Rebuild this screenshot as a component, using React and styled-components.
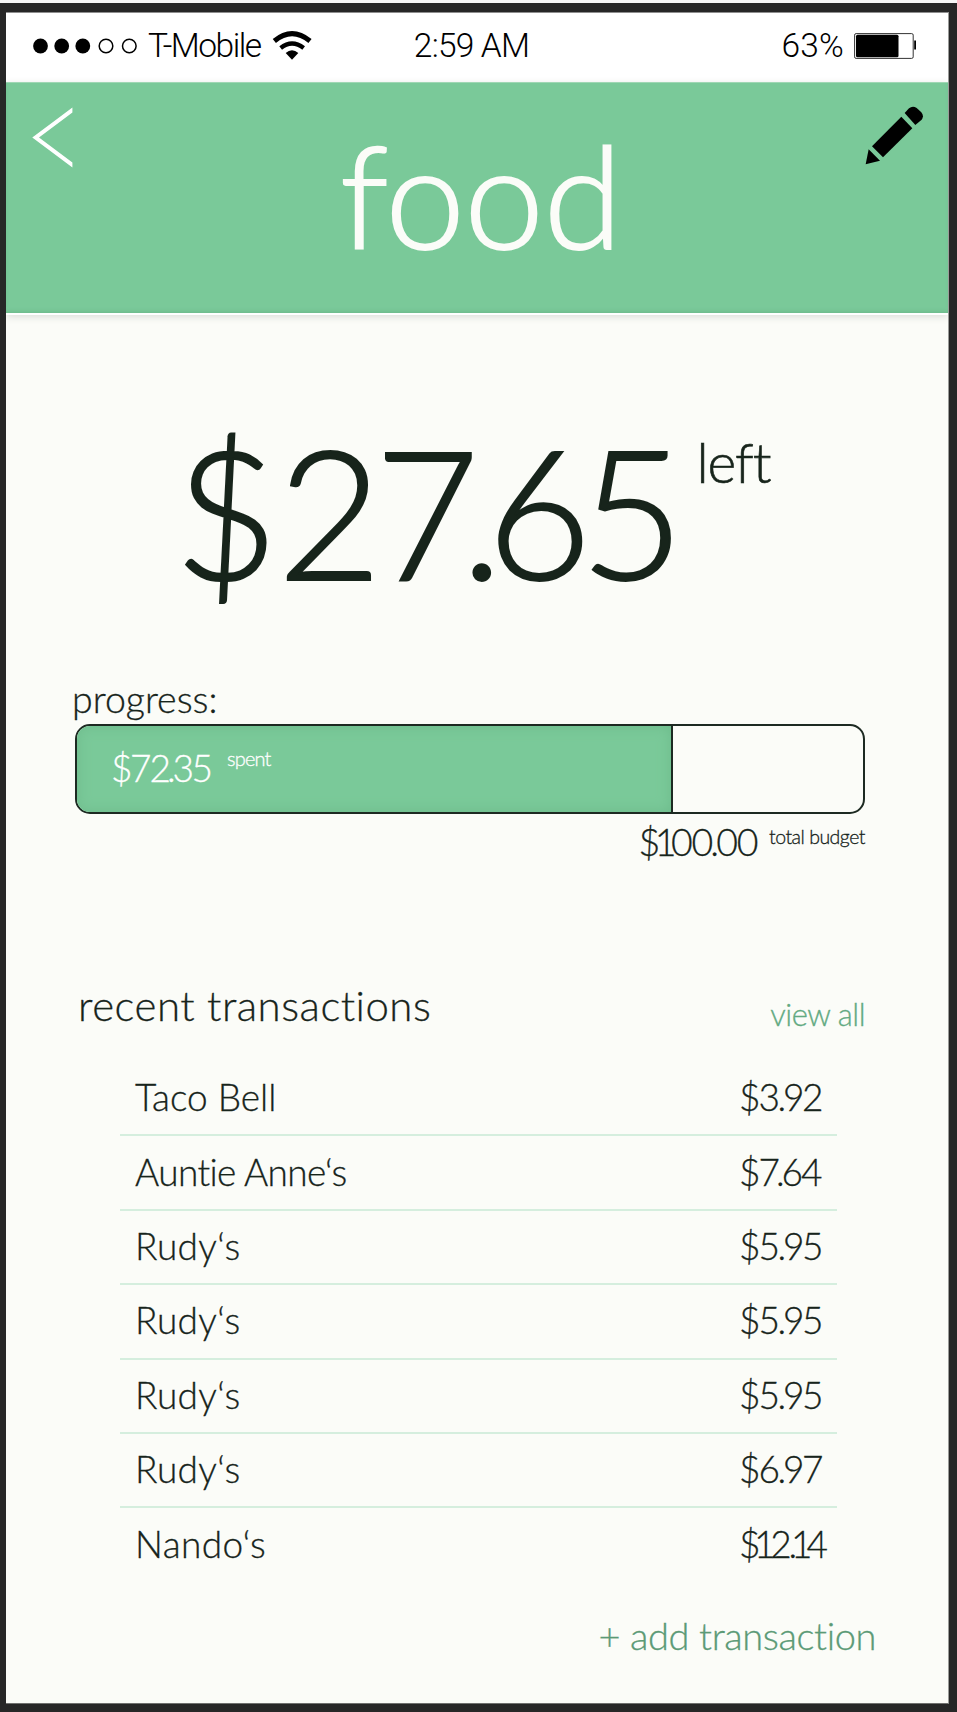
import React from "react";
import styled, { createGlobalStyle } from "styled-components";

const color = {
  frame: "#272727",
  green: "#7ac999",
  paper: "#fbfcf8",
  ink: "#17241b",
  line: "#d5eede",
};

const GlobalStyle = createGlobalStyle`
  * { box-sizing: border-box; }
  body { margin: 0; background: ${color.frame}; }
`;

const Device = styled.div`
  width: 957px;
  height: 1712px;
  padding: 9px 8px 7px 6px;
  border-top: 3px solid #f7f7f7;
  background: ${color.frame};
  overflow: hidden;
`;

const Screen = styled.main`
  height: 1692px;
  border-top: 1px solid #8e8e8e;
  border-right: 1px solid #9a9b99;
  border-bottom: 1px solid #6f706e;
  background: ${color.paper};
  color: ${color.ink};
  font-family: Lato, "Open Sans", sans-serif;
  font-weight: 300;
  overflow: hidden;
`;

const Text = styled.span`
  display: block;
  white-space: nowrap;
  font-size: ${(p) => p.$size}px;
  line-height: ${(p) => p.$line || p.$size}px;
  letter-spacing: ${(p) => p.$track || 0}px;
  color: ${(p) => p.$color || "inherit"};
  margin-top: ${(p) => p.$drop || 0}px;
  -webkit-text-stroke: ${(p) => p.$bold ?? 0.3}px currentColor;
`;

const Digit = styled.span`
  letter-spacing: ${(p) => p.$track}px;
`;

const StatusBar = styled.div`
  display: grid;
  grid-template-columns: 1fr auto 1fr;
  align-items: center;
  height: 69px;
  padding: 0 32px 4px 27px;
  background: #fff;
  color: #000;
  font-family: Roboto, "Liberation Sans", sans-serif;
`;

const StatusGroup = styled.div`
  display: flex;
  align-items: center;
  justify-content: ${(p) => (p.$end ? "flex-end" : "flex-start")};
`;

const Clock = styled.div`
  padding-right: 6px;
`;

const Signal = styled.svg`
  width: 106px;
  height: 18px;
  margin-right: 9px;
`;

const Wifi = styled.svg`
  width: 40px;
  height: 30px;
  margin-left: 11px;
  margin-top: -1px;
`;

const Battery = styled.svg`
  width: 62px;
  height: 26px;
  margin-left: 10px;
`;

const Header = styled.header`
  display: grid;
  grid-template-columns: 1fr auto 1fr;
  align-items: start;
  height: 231px;
  padding: 23px 24px 0 26px;
  background: ${color.green};
  border-top: 1px solid #9fd7b4;
  box-shadow: inset 0 -3px 4px -2px #6cb688, 0 2px 0 #fff, 0 3px 8px #d6d7d3;
`;

const Title = styled.h1`
  margin: 17px 0 0;
  padding-left: 6px;
  font-size: 142px;
  line-height: 142px;
  font-weight: 300;
  letter-spacing: 0;
  color: ${color.paper};
  -webkit-text-stroke: 2px currentColor;
`;

const Back = styled.svg`
  width: 42px;
  height: 64px;
`;

const Pencil = styled.svg`
  width: 59px;
  height: 59px;
  justify-self: end;
`;

const Remaining = styled.section`
  display: flex;
  align-items: flex-start;
  gap: 21px;
  margin: 107px 0 0 168px;
`;

const Section = styled.section`
  width: 793px;
  margin: ${(p) => p.$top}px 0 0 66px;
`;

const Bar = styled.div`
  height: 90px;
  margin: 5px 0 0 3px;
  border: 2px solid #1d2a22;
  border-radius: 15px;
  overflow: hidden;
`;

const BarFill = styled.div`
  display: flex;
  gap: 16px;
  height: 100%;
  padding: 22px 0 0 34px;
  border-right: 2px solid #1d2a22;
  background: ${color.green};
  box-shadow: inset 0 0 14px #6dbb8b;
  color: #fff;
`;

const Budget = styled.div`
  display: flex;
  justify-content: flex-end;
  gap: 12px;
  margin-top: 8px;
`;

const SectionHead = styled.div`
  display: flex;
  justify-content: space-between;
  padding-left: 6px;
`;

const List = styled.ul`
  width: 717px;
  margin: 32px 0 0 48px;
  padding: 0;
  list-style: none;
`;

const Row = styled.li`
  display: flex;
  justify-content: space-between;
  align-items: center;
  height: 74.4px;
  padding: 0 0 3px 15px;
  border-bottom: 2px solid ${color.line};
  &:last-child { border-bottom-color: transparent; }
`;

const Amount = styled.div`
  width: 98px;
`;

const AddLink = styled.div`
  display: flex;
  justify-content: flex-end;
  width: 870px;
`;

const even = [-2, -2.5, -3, -2.5, 0];

const transactions = [
  { name: "Taco Bell", amount: "$3.92", track: 0, kern: even },
  { name: "Auntie Anne‘s", amount: "$7.64", track: -0.6, kern: [-2, -4, -3, -2, 0] },
  { name: "Rudy‘s", amount: "$5.95", track: 0.3, kern: even },
  { name: "Rudy‘s", amount: "$5.95", track: 0.3, kern: even },
  { name: "Rudy‘s", amount: "$5.95", track: 0.3, kern: even },
  { name: "Rudy‘s", amount: "$6.97", track: 0.3, kern: even },
  { name: "Nando‘s", amount: "$12.14", track: 0.4, kern: [-6.5, -5.2, -3.3, -6, -6, 0] },
];

const spentPercent = 75.8;

function Money({ value, kern, size, line, bold }) {
  return (
    <Text $size={size} $line={line} $bold={bold}>
      {[...value].map((ch, i) => (
        <Digit key={i} $track={kern[i]}>{ch}</Digit>
      ))}
    </Text>
  );
}

export default function App() {
  return (
    <Device>
      <GlobalStyle />
      <Screen>
        <StatusBar>
          <StatusGroup>
            <Signal viewBox="0 0 106 18">
              <circle cx="7.5" cy="9" r="7.4" />
              <circle cx="28.7" cy="9" r="7.4" />
              <circle cx="49.8" cy="9" r="7.4" />
              <circle cx="73" cy="9" r="6.8" fill="none" stroke="#000" strokeWidth="1.5" />
              <circle cx="96.3" cy="9" r="6.8" fill="none" stroke="#000" strokeWidth="1.5" />
            </Signal>
            <Text $size={33.5} $track={-1.5} $bold={0}>T-Mobile</Text>
            <Wifi viewBox="816 88 120 90">
              <path d="M823 121Q876 77 930 121" fill="none" stroke="#000" strokeWidth="15" />
              <path d="M842 142Q876 115 911 142" fill="none" stroke="#000" strokeWidth="13" />
              <path d="M857 157Q876 141 895 157L876 177Z" />
            </Wifi>
          </StatusGroup>
          <Clock>
            <Text $size={33.5} $track={-0.8} $bold={0}>2:59 AM</Text>
          </Clock>
          <StatusGroup $end>
            <Text $size={33.5} $track={0.2} $bold={0}>63%</Text>
            <Battery viewBox="0 0 62 26">
              <rect x="0.6" y="0.6" width="58.6" height="24.8" rx="1.5" fill="#fff" stroke="#333" />
              <rect x="2" y="1.7" width="42.5" height="22.6" rx="1.5" />
              <rect x="60.2" y="7.5" width="1.8" height="9" />
            </Battery>
          </StatusGroup>
        </StatusBar>

        <Header>
          <Back viewBox="0 0 42 64">
            <path d="M0.3 31.5L40.4 1.5V6.5L7 31.5L40.4 56.5V61.5Z" fill="#fff" />
          </Back>
          <Title>food</Title>
          <Pencil viewBox="0 0 177 177">
            <path d="M109 32L142 67L54 154L21 121Z" />
            <path d="M11 130L45 164L2 175Z" />
            <path d="M119 21L132 7Q143 -2 155 6L169 19Q178 30 170 41L151 57Z" />
          </Pencil>
        </Header>

        <Remaining>
          <Money value="$27.65" size={180} bold={2} kern={[-1, -7, -18.6, -15.6, -11.5, -9]} />
          <Text $size={55} $track={-1} $drop={15} $bold={0.6}>left</Text>
        </Remaining>

        <Section $top={79}>
          <Text $size={37.5} $line={40}>progress:</Text>
          <Bar>
            <BarFill style={{ width: `${spentPercent}%` }}>
              <Money value="$72.35" size={37} line={40} kern={[-2.5, -2, -4, -3, -2.5, -2]} />
              <Text $size={20} $track={-0.8}>spent</Text>
            </BarFill>
          </Bar>
          <Budget>
            <Money value="$100.00" size={37.5} line={40} kern={[-5.5, -5.5, -1.3, -3, -2.6, -1.3, -1.5]} />
            <Text $size={19.5} $line={24} $track={-0.5} $drop={3}>total budget</Text>
          </Budget>
        </Section>

        <Section $top={118}>
          <SectionHead>
            <Text $size={42} $line={50} $track={0.5}>recent transactions</Text>
            <Text $size={31} $line={32} $track={-0.5} $drop={18} $color="#62aa82">view all</Text>
          </SectionHead>
          <List>
            {transactions.map((t, i) => (
              <Row key={i}>
                <Text $size={37} $track={t.track}>{t.name}</Text>
                <Amount>
                  <Money value={t.amount} size={37} kern={t.kern} />
                </Amount>
              </Row>
            ))}
          </List>
        </Section>

        <AddLink>
          <Text $size={38} $track={-0.4} $drop={33} $color="#5b9a76">+ add transaction</Text>
        </AddLink>
      </Screen>
    </Device>
  );
}
